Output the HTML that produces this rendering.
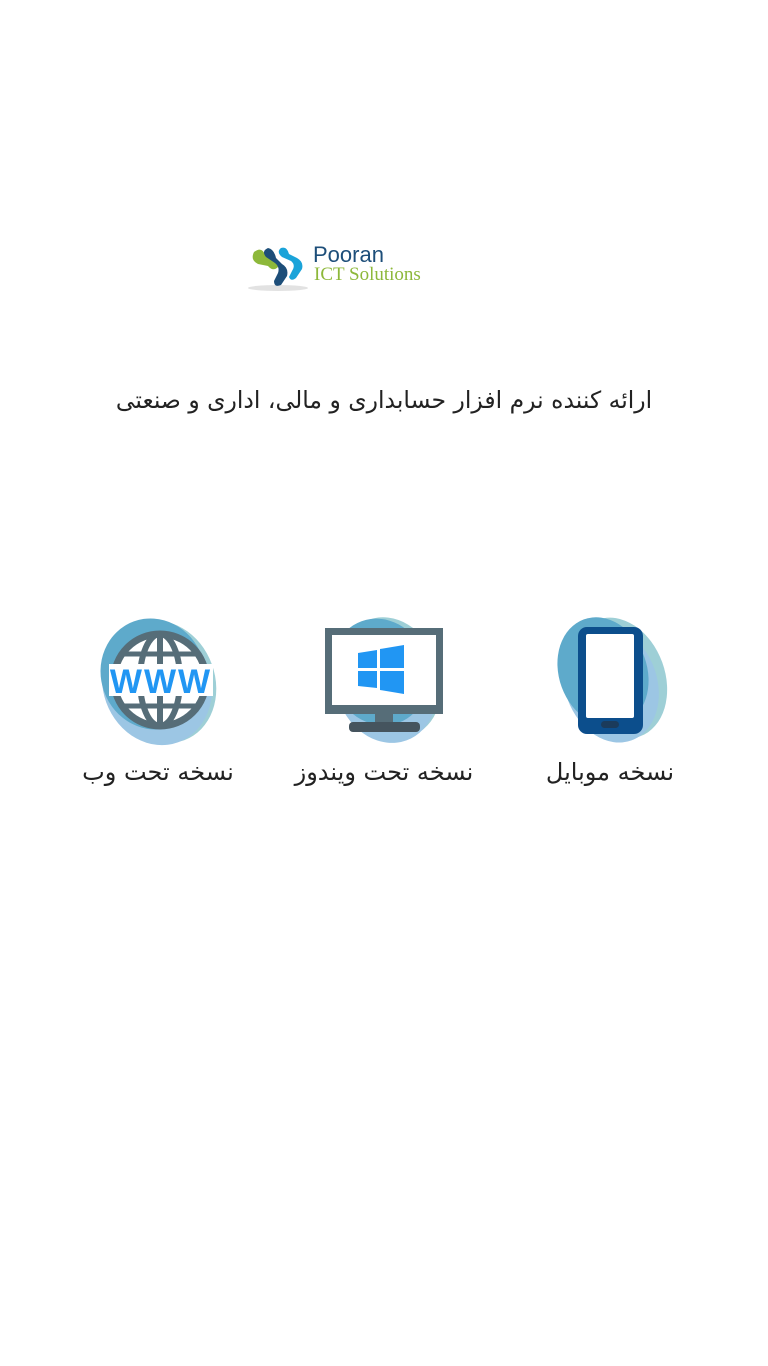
<!DOCTYPE html>
<html><head><meta charset="utf-8"><style>
body{margin:0;width:768px;height:1366px;background:#fff;position:relative;font-family:"DejaVu Sans","Liberation Sans",sans-serif;color:#222}
.t{position:absolute;white-space:nowrap;direction:rtl;font-size:23px}
svg{position:absolute}
</style></head><body>
<svg style="left:248px;top:240px" width="70" height="54" viewBox="0 0 70 54">
<ellipse cx="30" cy="48" rx="30" ry="3" fill="#e2e2e2"/>
<path d="M6 12 q-4 8 4 12 l10 2 q5 6 10 1 q2-7-5-10 l-8-2 q-3-9-11-3z" fill="#8db83a"/>
<path d="M20 8 q-7 3-2 9 l9 6 q5 4 3 10 l-4 8 q0 7 7 4 l6-9 q2-8-5-12 l-6-6 q-2-9-8-10z" fill="#1d4e79"/>
<path d="M33 8 q-5 4 1 9 l9 4 q5 4 1 10 l-3 6 q2 5 7 1 l6-9 q2-7-5-11 l-8-4 q-2-8-8-6z" fill="#1aa3d9"/>
</svg>
<div style="position:absolute;left:313px;top:242px;font-family:'Liberation Sans',sans-serif;font-size:22px;color:#1d4e79">Pooran</div>
<div style="position:absolute;left:314px;top:264px;font-family:'Liberation Serif',serif;font-size:19px;color:#8db83a">ICT Solutions</div>
<div class="t" style="left:110px;top:386px;width:548px;text-align:center;font-size:23.5px">ارائه کننده نرم افزار حسابداری و مالی، اداری و صنعتی</div>

<!-- web -->
<svg style="left:95px;top:612px" width="130" height="135" viewBox="0 0 130 135">
<ellipse cx="68" cy="70" rx="52" ry="62" transform="rotate(-20 68 70)" fill="#9ecfd6"/>
<ellipse cx="62" cy="72" rx="54" ry="62" transform="rotate(-20 62 72)" fill="#9cc6e4"/>
<ellipse cx="58" cy="62" rx="52" ry="56" transform="rotate(-20 58 62)" fill="#5eaacb"/>
<circle cx="65" cy="68" r="46" fill="#fff" stroke="#566d78" stroke-width="7"/>
<ellipse cx="65" cy="68" rx="20" ry="46" fill="none" stroke="#566d78" stroke-width="6"/>
<line x1="65" y1="22" x2="65" y2="114" stroke="#566d78" stroke-width="6"/>
<line x1="28" y1="42" x2="102" y2="42" stroke="#566d78" stroke-width="5"/>
<line x1="28" y1="94" x2="102" y2="94" stroke="#566d78" stroke-width="5"/>
<rect x="14" y="52" width="104" height="32" fill="#fff"/>
<text x="66" y="81" text-anchor="middle" font-family="Liberation Sans" font-weight="bold" font-size="34" fill="#2196f3" letter-spacing="2">WWW</text>
</svg>
<!-- monitor -->
<svg style="left:320px;top:612px" width="130" height="135" viewBox="0 0 130 135">
<ellipse cx="70" cy="66" rx="50" ry="62" transform="rotate(-20 70 66)" fill="#9ecfd6"/>
<ellipse cx="66" cy="72" rx="50" ry="60" transform="rotate(-20 66 72)" fill="#9cc6e4"/>
<ellipse cx="60" cy="60" rx="48" ry="54" transform="rotate(-20 60 60)" fill="#5eaacb"/>
<rect x="5" y="16" width="118" height="86" fill="#566d78"/>
<rect x="12" y="23" width="104" height="70" fill="#fff"/>
<rect x="55" y="102" width="18" height="10" fill="#566d78"/>
<rect x="29" y="110" width="71" height="10" rx="4" fill="#45545e"/>
<polygon points="38,41 57,38 57,56 38,56" fill="#2196f3"/>
<polygon points="60,37 84,33 84,56 60,56" fill="#2196f3"/>
<polygon points="38,59 57,59 57,76 38,74" fill="#2196f3"/>
<polygon points="60,59 84,59 84,82 60,78" fill="#2196f3"/>
</svg>
<!-- phone -->
<svg style="left:545px;top:612px" width="130" height="135" viewBox="0 0 130 135">
<ellipse cx="74" cy="66" rx="46" ry="62" transform="rotate(-20 74 66)" fill="#9ecfd6"/>
<ellipse cx="66" cy="72" rx="46" ry="60" transform="rotate(-20 66 72)" fill="#9cc6e4"/>
<ellipse cx="58" cy="60" rx="44" ry="56" transform="rotate(-20 58 60)" fill="#5eaacb"/>
<rect x="33" y="15" width="65" height="107" rx="9" fill="#0c4e8c"/>
<rect x="41" y="22" width="48" height="84" rx="2" fill="#fff"/>
<rect x="56" y="109" width="18" height="7" rx="3.5" fill="#1b3b5b"/>
</svg>
<div class="t" style="left:58px;top:758px;width:200px;text-align:center;font-size:24px">نسخه تحت وب</div>
<div class="t" style="left:280px;top:758px;width:208px;text-align:center;font-size:24px">نسخه  تحت ویندوز</div>
<div class="t" style="left:525px;top:758px;width:170px;text-align:center;font-size:24px">نسخه موبایل</div>
</body></html>
